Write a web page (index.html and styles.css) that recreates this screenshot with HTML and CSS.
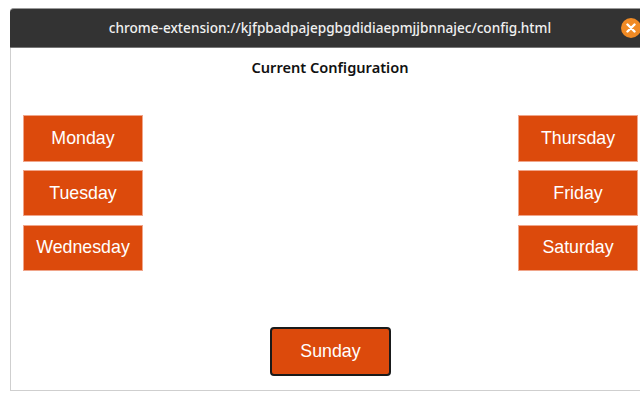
FILE: index.html
```html
<!DOCTYPE html>
<html lang="en">
<head>
<meta charset="utf-8">
<title>Config</title>
<link rel="stylesheet" href="styles.css">
</head>
<body>
<div class="window">
  <header class="titlebar">
    <span class="title">chrome-extension://kjfpbadpajepgbgdidiaepmjjbnnajec/config.html</span>
    <span class="close">
      <svg width="10" height="10" viewBox="0 0 10 10"><path d="M1.5 1.5l7 7M8.5 1.5l-7 7" stroke="#fff" stroke-width="2.4" stroke-linecap="round"/></svg>
    </span>
  </header>
  <main class="content">
    <h1 class="heading">Current Configuration</h1>
    <div class="columns">
      <div class="column">
        <button class="day">Monday</button>
        <button class="day">Tuesday</button>
        <button class="day">Wednesday</button>
      </div>
      <div class="column">
        <button class="day">Thursday</button>
        <button class="day">Friday</button>
        <button class="day">Saturday</button>
      </div>
    </div>
    <div class="bottom">
      <button class="day active">Sunday</button>
    </div>
  </main>
</div>
</body>
</html>
```
FILE: styles.css
```css
html, body {
  margin: 0;
  padding: 0;
  height: 400px;
  overflow: hidden;
  background: #fff;
}
.window {
  box-sizing: border-box;
  position: relative;
  width: 640px;
  height: 383px;
  margin: 8px 0 0 10px;
  border: 1px solid #cfcfcf;
  border-top: 0;
  border-radius: 4px 4px 0 0;
  display: flex;
  flex-direction: column;
}
.titlebar {
  position: relative;
  height: 40px;
  margin: 0 -1px;
  padding-bottom: 2px;
  flex: none;
  background: #333333;
  border-top: 1px solid #999;
  border-bottom: 1px solid #777;
  box-sizing: border-box;
  border-radius: 4px 4px 0 0;
  display: flex;
  align-items: center;
  justify-content: center;
}
.title {
  font: 500 13.62px "Noto Sans", sans-serif;
  color: #f0f0f0;
  white-space: nowrap;
}
.close {
  position: absolute;
  left: 611px;
  top: 9px;
  width: 20px;
  height: 20px;
  border-radius: 50%;
  background: #f08a24;
  display: flex;
  align-items: center;
  justify-content: center;
}
.content {
  flex: 1;
  display: flex;
  flex-direction: column;
}
.heading {
  margin: 9px 0 0;
  height: 20px;
  text-align: center;
  font: 600 14.6px/20px "Noto Sans", sans-serif;
  color: #111;
}
.columns {
  display: flex;
  justify-content: space-between;
  padding: 38px 11px 0 12px;
}
.column {
  display: flex;
  flex-direction: column;
  gap: 8.2px;
}
.day {
  box-sizing: border-box;
  width: 120px;
  height: 46.6px;
  padding: 0;
  border: 1px solid #f0a58a;
  border-radius: 0;
  background: #dc4a0c;
  color: #fff;
  font: 17.8px "Liberation Sans", sans-serif;
}
.bottom {
  display: flex;
  justify-content: center;
  padding-left: 1px;
  margin-top: 56px;
}
.day.active {
  width: 121px;
  height: 49px;
  border: 2px solid #1a1a1a;
  border-radius: 4px;
}
```
